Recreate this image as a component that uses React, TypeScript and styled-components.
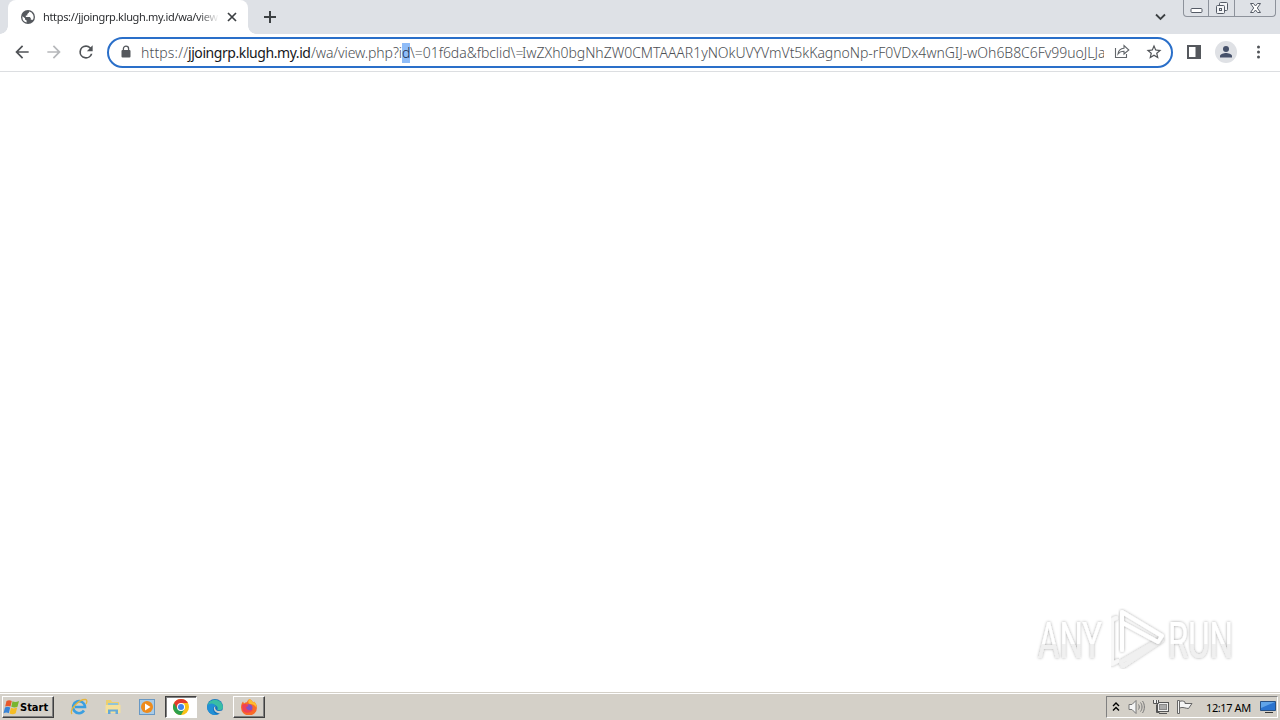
import styled, { createGlobalStyle, css } from "styled-components";

const GlobalStyle = createGlobalStyle`
  * {
    box-sizing: border-box;
  }

  body {
    margin: 0;
    background: #fff;
    font-family: "Noto Sans", "DejaVu Sans", sans-serif;
    overflow: hidden;
  }

  svg {
    display: block;
    flex: none;
  }
`;

const Screen = styled.div`
  width: 1280px;
  height: 720px;
  display: flex;
  flex-direction: column;
  overflow: hidden;
`;

const TabStrip = styled.header`
  height: 34px;
  display: flex;
  background: #dee1e6;
  padding-left: 8px;
`;

const Tab = styled.div`
  position: relative;
  width: 240px;
  height: 34px;
  display: flex;
  align-items: center;
  padding: 0 9px 0 13px;
  background: #fff;
  border-radius: 8px 8px 0 0;

  &::before,
  &::after {
    content: "";
    position: absolute;
    bottom: 0;
    width: 8px;
    height: 8px;
  }

  &::before {
    left: -8px;
    background: radial-gradient(circle at 0 0, transparent 7.5px, #fff 8px);
  }

  &::after {
    right: -8px;
    background: radial-gradient(circle at 100% 0, transparent 7.5px, #fff 8px);
  }
`;

const TabTitle = styled.span`
  width: 176px;
  margin-left: 8px;
  overflow: hidden;
  white-space: nowrap;
  font-size: 11px;
  line-height: 16px;
  letter-spacing: -0.34px;
  color: #2c2e31;
  mask-image: linear-gradient(to right, #000 88%, transparent);
`;

const TabClose = styled.span`
  margin-left: auto;
`;

const NewTab = styled.div`
  margin: 10px 0 0 15px;
`;

const StripRight = styled.div`
  margin-left: auto;
  display: flex;
  padding-right: 4px;
`;

const TabSearch = styled.div`
  padding: 13px 17px 0 0;
`;

const WindowButtons = styled.div`
  display: flex;
  width: 93px;
  height: 17px;
  border: 1px solid #8d929b;
  border-top: 0;
  border-radius: 0 0 4px 4px;
`;

const WindowButton = styled.div<{ $width: number }>`
  width: ${(props) => props.$width}px;
  display: flex;
  align-items: center;
  justify-content: center;

  & + & {
    border-left: 1px solid #8d929b;
  }
`;

const Toolbar = styled.div`
  height: 38px;
  display: flex;
  align-items: center;
  padding: 0 12px 1px;
  border-bottom: 1px solid #dcdee1;
`;

const NavIcons = styled.nav`
  display: flex;
  gap: 12px;
  margin-right: 11px;
`;

const Omnibox = styled.div`
  width: 1066px;
  height: 31px;
  display: flex;
  align-items: center;
  padding: 0 8px 0 11px;
  border: 2px solid #2a6fc9;
  border-radius: 16px;
`;

const Url = styled.div`
  display: flex;
  width: 963px;
  margin: 2px 10px 0 9px;
  overflow: hidden;
  font-size: 14px;
  font-weight: 300;
  line-height: 20px;
  white-space: pre;
`;

const UrlPart = styled.span<{
  $width: number;
  $spacing: number;
  $host?: boolean;
  $selected?: boolean;
}>`
  flex: none;
  width: ${(props) => props.$width}px;
  letter-spacing: ${(props) => props.$spacing}px;
  color: ${(props) => (props.$host ? "#16181b" : "#4c4f54")};
  ${(props) => props.$host && "font-weight: 400;"}
  ${(props) =>
    props.$selected &&
    css`
      color: #1d2f4c;
      background: #8fbcf8;
    `}
`;

const OmniActions = styled.div`
  display: flex;
  gap: 15px;
`;

const ToolbarActions = styled.div`
  display: flex;
  align-items: center;
  margin-left: 14px;
  gap: 14px;
`;

const Page = styled.main`
  position: relative;
  flex: 1;
  background: #fff;
`;

const Watermark = styled.div`
  position: absolute;
  left: 1030px;
  top: 530px;
`;

const Taskbar = styled.footer`
  height: 28px;
  display: flex;
  align-items: center;
  padding: 3px 2px 2px;
  background: #d4d0c8;
  border-top: 1px solid #d4d0c8;
  box-shadow: inset 0 1px #fff;
`;

const raised = css`
  border: 1px solid;
  border-color: #fff #404040 #404040 #fff;
  box-shadow: inset -1px -1px #808080;
`;

const StartButton = styled.div`
  ${raised}
  width: 52px;
  height: 22px;
  display: flex;
  align-items: center;
  font: bold 11px "DejaVu Sans Condensed", "DejaVu Sans", sans-serif;
  letter-spacing: 0;
  color: #000;
`;

const QuickLaunch = styled.div`
  display: flex;
  margin-left: 9px;
  gap: 2px;
`;

const TaskButton = styled.div<{ $state?: "active" | "open" }>`
  width: 32px;
  height: 22px;
  display: flex;
  align-items: center;
  justify-content: center;
  ${(props) => props.$state === "open" && raised}
  ${(props) =>
    props.$state === "active" &&
    css`
      background: #fff;
      border: 1px solid;
      border-color: #404040 #fff #fff #404040;
      box-shadow: inset 1px 1px #808080;
    `}
`;

const Tray = styled.div`
  width: 172px;
  height: 22px;
  margin-left: auto;
  display: flex;
  align-items: center;
  padding-left: 5px;
  border: 1px solid;
  border-color: #808080 #fff #fff #808080;
`;

const TrayIcons = styled.div`
  display: flex;
  align-items: center;
  gap: 8px;
`;

const Clock = styled.span`
  width: 48px;
  margin: 0 6px 0 13px;
  font-size: 11px;
  letter-spacing: -0.4px;
  white-space: nowrap;
  color: #000;
`;

const GlobeIcon = () => (
  <svg width="14" height="14" viewBox="0 0 14 14">
    <circle cx="7" cy="7" r="7" fill="#55595e" />
    <path
      d="M1.5 6.2 4 8.2v1.2l1.6 1.2v1.8A5.6 5.6 0 0 1 1.5 6.2ZM8 1.6v1L6.3 4v1.5H4.8V7h4l1 1.2v1.5h1.4l.5.4A5.6 5.6 0 0 0 8 1.6Z"
      fill="#fff"
    />
  </svg>
);

const BackIcon = ({ color }: { color: string }) => (
  <svg width="20" height="20" viewBox="0 0 24 24" fill={color}>
    <path d="M20 11H7.83l5.59-5.59L12 4l-8 8 8 8 1.41-1.41L7.83 13H20v-2z" />
  </svg>
);

const ForwardIcon = ({ color }: { color: string }) => (
  <svg width="20" height="20" viewBox="0 0 24 24" fill={color}>
    <path d="m12 4-1.41 1.41L16.17 11H4v2h12.17l-5.58 5.59L12 20l8-8z" />
  </svg>
);

const ReloadIcon = () => (
  <svg width="20" height="20" viewBox="0 0 24 24" fill="#505357">
    <path d="M17.65 6.35A7.96 7.96 0 0 0 12 4a8 8 0 1 0 7.73 10h-2.08A6 6 0 1 1 12 6c1.66 0 3.14.69 4.22 1.78L13 11h7V4l-2.35 2.35z" />
  </svg>
);

const LockIcon = () => (
  <svg width="12" height="14" viewBox="0 0 12 14">
    <path d="M3.4 6V3.7a2.6 2.6 0 0 1 5.2 0V6" fill="none" stroke="#55585d" strokeWidth="1.3" />
    <rect x="1.5" y="5" width="9" height="7.6" rx="1" fill="#55585d" />
  </svg>
);

const ShareIcon = () => (
  <svg width="16" height="16" viewBox="0 0 16 16" fill="none" stroke="#62666b" strokeWidth="1.1">
    <path d="M1.5 5v9.5h11V11" />
    <path d="M4 11c.5-3.8 2.5-5.5 6-5.7V2.5L14.8 7 10 11V8.3C7.5 8.3 5.5 9 4 11Z" />
  </svg>
);

const StarIcon = () => (
  <svg width="18" height="18" viewBox="0 0 24 24" fill="#505357">
    <path d="m22 9.24-7.19-.62L12 2 9.19 8.63 2 9.24l5.46 4.73L5.82 21 12 17.27 18.18 21l-1.63-7.03L22 9.24zM12 15.4l-3.76 2.27 1-4.28-3.32-2.88 4.38-.38L12 6.1l1.71 4.04 4.38.38-3.32 2.88 1 4.28L12 15.4z" />
  </svg>
);

const SidePanelIcon = () => (
  <svg width="14" height="14" viewBox="0 0 14 14">
    <rect x="1" y="1" width="12" height="12" fill="#fff" stroke="#55585d" strokeWidth="2" />
    <rect x="8.5" y="1" width="5" height="12" fill="#55585d" />
  </svg>
);

const ProfileIcon = () => (
  <svg width="22" height="22" viewBox="0 0 22 22">
    <circle cx="11" cy="11" r="11" fill="#dfe1e5" />
    <circle cx="11" cy="8" r="3" fill="#46516a" />
    <path d="M5 16.5v-1.4C5 13 9 12 11 12s6 1 6 3.1v1.4Z" fill="#46516a" />
  </svg>
);

const MenuIcon = () => (
  <svg width="16" height="16" viewBox="0 0 16 16" fill="#505357">
    <circle cx="7.500" cy="3" r="1.500" />
    <circle cx="7.500" cy="8" r="1.500" />
    <circle cx="7.500" cy="13" r="1.500" />
  </svg>
);

const AnyRunLogo = () => (
  <svg width="220" height="74" viewBox="0 0 220 74">
    <defs>
      <linearGradient id="logo-fade" x1="0" y1="0" x2="0" y2="1">
        <stop offset="0.55" stopColor="#fff" />
        <stop offset="0.56" stopColor="#f0f0f0" />
      </linearGradient>
      <filter id="logo-shadow" x="-10%" y="-10%" width="120%" height="120%">
        <feDropShadow dx="0" dy="0" stdDeviation="1.4" floodColor="#000" floodOpacity="0.36" />
      </filter>
    </defs>
    <g fontFamily="Roboto, sans-serif" fontSize="50" fill="url(#logo-fade)" filter="url(#logo-shadow)">
      <text x="8" y="56" textLength="64" lengthAdjust="spacingAndGlyphs">
        ANY
      </text>
      <text x="138" y="56" textLength="65" lengthAdjust="spacingAndGlyphs">
        RUN
      </text>
    </g>
    <g fill="none" strokeWidth="4" strokeLinejoin="round" strokeLinecap="round">
      <path d="M132 38 93 64l-2-4 36-21" stroke="#f0f0f0" filter="url(#logo-shadow)" />
      <path d="M86 16l-4 2v44l6-3" stroke="#f8f8f8" filter="url(#logo-shadow)" />
      <path d="M92 48V10l40 24-4 6-35-19" stroke="#fff" filter="url(#logo-shadow)" />
    </g>
  </svg>
);

const WindowsFlag = () => (
  <svg width="17" height="17" viewBox="0 0 17 17">
    <path d="M3.5 2C5.500.8 7 1 8.800 2L7.500 7.600C5.600 6.700 4 6.700 2.200 7.600Z" fill="#e8592b" />
    <path d="M9.500 2.300c2 1 4 .9 6.500-.3l-1.500 5.800c-2 1-4 .9-6.200 0Z" fill="#79b52f" />
    <path d="M2 8.400c1.900-1 3.500-.9 5.200 0L5.800 14.200C4.200 13.300 2.500 13.300.5 14.200Z" fill="#3984d6" />
    <path d="M8 8.800c2 .9 3.900.8 6.200-.2l-1.500 5.700c-2 1.100-3.900 1.200-6.200.1Z" fill="#f5bd25" />
  </svg>
);

const ExplorerIcon = () => (
  <svg width="18" height="18" viewBox="0 0 18 18" fill="none">
    <path d="M14 12.5A6 6 0 1 1 15 9H5" stroke="#3b9fe0" strokeWidth="2.6" />
    <path d="M2 16C-1 12 9 1 15.500 1.500c2 .3 1.500 3 .5 4.500" stroke="#e5b53c" strokeWidth="1.3" />
  </svg>
);

const FolderIcon = () => (
  <svg width="18" height="18" viewBox="0 0 18 18">
    <path d="M2 2h5l1 2h7v10H2Z" fill="#ebcf70" />
    <path d="M4 5h10v4H4Z" fill="#8fc4d8" />
    <path d="M1.500 7h15v8h-15Z" fill="#f4e09a" />
    <path d="M4 16v-4.500h10V16h-2.500v-2.500h-5V16Z" fill="#65a9d7" />
  </svg>
);

const MediaIcon = () => (
  <svg width="16" height="16" viewBox="0 0 16 16">
    <rect x=".5" y=".5" width="15" height="15" fill="#a9cbe6" stroke="#6898c4" />
    <circle cx="8" cy="8" r="6" fill="#ee8b1c" />
    <path d="M6 4.500 11.500 8 6 11.500Z" fill="#fff" />
  </svg>
);

const ChromeIcon = () => (
  <svg width="16" height="16" viewBox="0 0 16 16">
    <circle cx="8" cy="8" r="8" fill="#fbc116" />
    <path d="M8 8 1.070 4A8 8 0 0 0 8 16l3.500-6Z" fill="#2da04c" />
    <path d="M8 4h6.930A8 8 0 0 0 1.070 4L4.500 10Z" fill="#e33b2e" />
    <circle cx="8" cy="8" r="4" fill="#fff" />
    <circle cx="8" cy="8" r="3" fill="#4084ed" />
  </svg>
);

const EdgeIcon = () => (
  <svg width="16" height="16" viewBox="0 0 16 16">
    <circle cx="8" cy="8" r="8" fill="#1673be" />
    <path d="M.2 7A8 8 0 0 1 16 8c0 3-2.500 3.500-4.500 3.200-1.500-.3-1-1.200-.8-2C11 6 3 3.500.2 7Z" fill="#39bda5" />
    <path d="M.2 7C2.500 3 8 4.500 8.500 7c-4 1-3 7 2 8.600C5 17-.5 13 .2 7Z" fill="#2190d6" />
    <path d="M8.500 7.200c-1.500 3 1.500 6 7 4.300l.5 3c-3 .5-8-.5-9-4-.4-1.500.1-2.800 1.500-3.300Z" fill="#d4d0c8" />
  </svg>
);

const FirefoxIcon = () => (
  <svg width="16" height="16" viewBox="0 0 16 16">
    <path d="M8.500 0C11 1 12 3 12 3.500c1-.2 1-1 1-1 2 2 3 4 3 6A8 8 0 0 1 0 8.500c0-3 1-5 2-6l1 2c1-1 2-1.300 3-1.300.5-1.700 1.500-2.600 2.500-3.200Z" fill="#f96a28" />
    <path d="M8.500 0C11 1 12 3 12 3.500c1-.2 1-1 1-1 2 2 3 4 2.500 6.500C14 6 12 5 9 5 6.500 4 7 1.500 8.500 0Z" fill="#fdbd2d" />
    <circle cx="8" cy="8.800" r="3.500" fill="#8050c8" />
    <path d="M1 6c2-1.500 5-1 6.500.8L5 8.200c.5 3 4 4 7 2-1 4-8 5-10.500 1Z" fill="#ef4056" />
  </svg>
);

const SpeakerIcon = () => (
  <svg width="17" height="16" viewBox="0 0 17 16" fill="none" stroke="#777">
    <path d="M1 5.500h3l4-4v13l-4-4H1Z" fill="#f5f5f5" />
    <path d="M10.500 5.500c1 1.500 1 3.500 0 5M12.500 3.500c2 2.500 2 6.500 0 9M14.500 2c2.500 3.500 2.500 8.500 0 12" />
  </svg>
);

const NetworkIcon = () => (
  <svg width="16" height="16" viewBox="0 0 16 16" stroke="#555">
    <rect x="4.500" y="3.500" width="11" height="9" fill="#eee" />
    <rect x="6.500" y="5.500" width="7" height="5" fill="#aaa" stroke="#888" />
    <path d="M6 14.500h8M3.500 5.500v8h3" fill="none" />
    <path d="M.5 1v3.500h5V1M3.500 1v3" fill="#eee" />
  </svg>
);

const FlagIcon = () => (
  <svg width="16" height="16" viewBox="0 0 16 16" fill="#f5f5f5" stroke="#666">
    <path d="M.5 1.500h2v13h-2Z" />
    <path d="M2.500 2.500c2-1 4-.5 5.500.5v1.500h7l-3.500 5c-3 0-5.500-2-9-.5Z" />
  </svg>
);

const DesktopIcon = () => (
  <svg width="16" height="14" viewBox="0 0 16 14">
    <path d="M.5 1.500h15v9H.5Z" fill="#2b74cf" stroke="#285184" />
    <path d="M1 2h14L1 8Z" fill="#60a4e8" />
    <path d="M5 12.500h8" stroke="#333" />
  </svg>
);

export default function App() {
  return (
    <>
      <GlobalStyle />
      <Screen>
        <TabStrip>
          <Tab>
            <GlobeIcon />
            <TabTitle>https://jjoingrp.klugh.my.id/wa/view</TabTitle>
            <TabClose>
              <svg width="14" height="14" viewBox="0 0 14 14" stroke="#3c4043" strokeWidth="1.7">
                <path d="m3 3 8 8m0-8-8 8" />
              </svg>
            </TabClose>
          </Tab>
          <NewTab>
            <svg width="14" height="14" viewBox="0 0 14 14" stroke="#3c4043" strokeWidth="2">
              <path d="M7 1v12M1 7h12" />
            </svg>
          </NewTab>
          <StripRight>
            <TabSearch>
              <svg width="11" height="8" viewBox="0 0 11 8" fill="none" stroke="#3c4043" strokeWidth="1.8">
                <path d="m1 1.500 4.500 4.500L10 1.500" />
              </svg>
            </TabSearch>
            <WindowButtons>
              <WindowButton $width={24}>
                <svg width="13" height="15" viewBox="0 0 13 15">
                  <rect x="1" y="7.500" width="11" height="4" rx="1" fill="#fff" stroke="#555b66" />
                </svg>
              </WindowButton>
              <WindowButton $width={26}>
                <svg width="14" height="14" viewBox="0 0 14 14" fill="#f3f4f6" stroke="#555b66">
                  <rect x="4.500" y="1.500" width="8" height="8" rx="1" />
                  <rect x="1.500" y="4.500" width="8" height="8" rx="1" />
                  <rect x="4.500" y="7.500" width="2" height="2" />
                </svg>
              </WindowButton>
              <WindowButton $width={41}>
                <svg width="13" height="12" viewBox="0 0 13 12">
                  <path d="M1.500 1.500h3l2 2.500 2-2.500h3L8.300 6l3.200 4.500h-3l-2-2.500-2 2.500h-3L4.700 6Z" fill="#fff" stroke="#555b66" />
                </svg>
              </WindowButton>
            </WindowButtons>
          </StripRight>
        </TabStrip>
        <Toolbar>
          <NavIcons>
            <BackIcon color="#505357" />
            <ForwardIcon color="#b6b8bb" />
            <ReloadIcon />
          </NavIcons>
          <Omnibox>
            <LockIcon />
            <Url>
              <UrlPart $width={47} $spacing={0.15}>https://</UrlPart>
              <UrlPart $width={123} $spacing={-0.43} $host>jjoingrp.klugh.my.id</UrlPart>
              <UrlPart $width={91} $spacing={-0.1}>/wa/view.php?i</UrlPart>
              <UrlPart $width={8} $spacing={-0.5} $selected>d</UrlPart>
              <UrlPart $width={112} $spacing={-0.05}>\=01f6da&amp;fbclid\=</UrlPart>
              <UrlPart $width={582} $spacing={-0.04}>
                IwZXh0bgNhZW0CMTAAAR1yNOkUVYVmVt5kKagnoNp-rF0VDx4wnGIJ-wOh6B8C6Fv99uoJLJa
              </UrlPart>
            </Url>
            <OmniActions>
              <ShareIcon />
              <StarIcon />
            </OmniActions>
          </Omnibox>
          <ToolbarActions>
            <SidePanelIcon />
            <ProfileIcon />
            <MenuIcon />
          </ToolbarActions>
        </Toolbar>
        <Page>
          <Watermark>
            <AnyRunLogo />
          </Watermark>
        </Page>
        <Taskbar>
          <StartButton>
            <WindowsFlag />
            Start
          </StartButton>
          <QuickLaunch>
            <TaskButton><ExplorerIcon /></TaskButton>
            <TaskButton><FolderIcon /></TaskButton>
            <TaskButton><MediaIcon /></TaskButton>
            <TaskButton $state="active"><ChromeIcon /></TaskButton>
            <TaskButton><EdgeIcon /></TaskButton>
            <TaskButton $state="open"><FirefoxIcon /></TaskButton>
          </QuickLaunch>
          <Tray>
            <TrayIcons>
              <svg width="8" height="10" viewBox="0 0 8 10" fill="none" stroke="#000" strokeWidth="1.4">
                <path d="m1 4 3-3 3 3M1 8.500l3-3 3 3" />
              </svg>
              <SpeakerIcon />
              <NetworkIcon />
              <FlagIcon />
            </TrayIcons>
            <Clock>12:17 AM</Clock>
            <DesktopIcon />
          </Tray>
        </Taskbar>
      </Screen>
    </>
  );
}
